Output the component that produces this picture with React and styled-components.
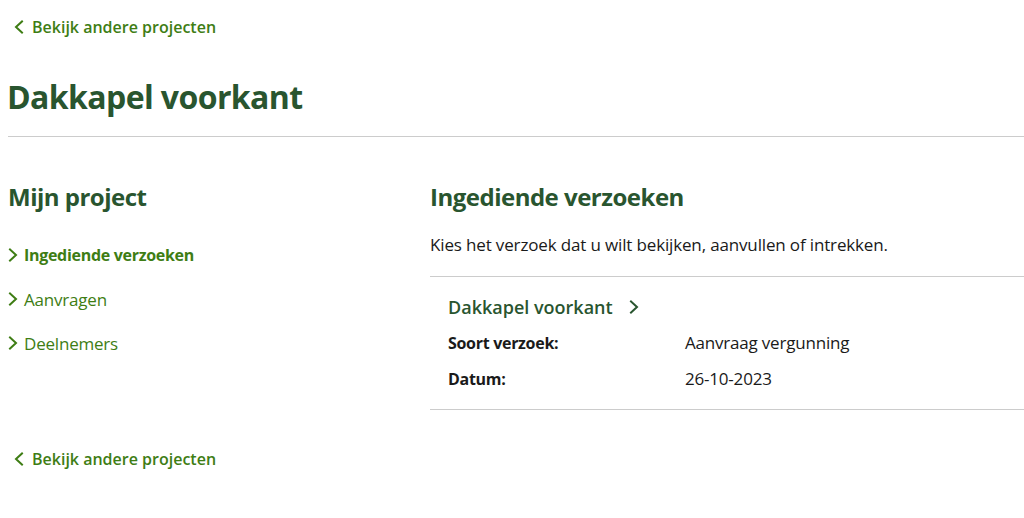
import React from "react";
import styled, { createGlobalStyle } from "styled-components";

const GlobalStyle = createGlobalStyle`
  body {
    margin: 0;
    background: #ffffff;
    font-family: "Open Sans", "Liberation Sans", sans-serif;
    color: #1a1a1a;
  }
`;

const darkGreen = "#29552f";
const linkGreen = "#3e7d14";

const Page = styled.div`
  padding-left: 8px;
  width: 1016px;
`;

const BackLink = styled.a`
  display: flex;
  align-items: center;
  gap: 8px;
  padding-left: 6px;
  height: 24px;
  margin-top: ${(p) => p.$top}px;
  color: ${linkGreen};
  font-size: 16px;
  font-weight: 600;
  text-decoration: none;
`;

const Title = styled.h1`
  margin: 38px 0 0 -1px;
  font-size: 32px;
  line-height: 40px;
  font-weight: 700;
  color: ${darkGreen};
  letter-spacing: -0.6px;
`;

const Divider = styled.hr`
  margin: 0;
  border: 0;
  border-top: 1px solid #cccccc;
`;

const TopDivider = styled(Divider)`
  margin-top: 19px;
`;

const Columns = styled.div`
  display: flex;
  margin-top: 44px;
`;

const Side = styled.nav`
  width: 422px;
  flex-shrink: 0;
`;

const Main = styled.section`
  flex: 1;
`;

const SubTitle = styled.h2`
  margin: 0;
  font-size: 24px;
  line-height: 32px;
  font-weight: 700;
  color: ${darkGreen};
  letter-spacing: -0.5px;
`;

const NavList = styled.ul`
  list-style: none;
  margin: 30px 0 0;
  padding: 0;
  display: flex;
  flex-direction: column;
  gap: 20px;
`;

const NavItem = styled.li`
  display: flex;
  align-items: center;
  gap: 6px;
  height: 24px;
  color: ${linkGreen};
  font-size: ${(p) => (p.$active ? 16 : 17)}px;
  font-weight: ${(p) => (p.$active ? 700 : 400)};
  letter-spacing: ${(p) => (p.$active ? -0.3 : -0.2)}px;
`;

const Intro = styled.p`
  margin: 20px 0 0;
  font-size: 17px;
  line-height: 24px;
  letter-spacing: -0.15px;
`;

const ListDivider = styled(Divider)`
  margin-top: 19px;
`;

const Request = styled.div`
  padding: 18px 18px 18px;
  border-bottom: 1px solid #cccccc;
`;

const RequestTitle = styled.a`
  display: flex;
  align-items: center;
  gap: 16px;
  color: ${darkGreen};
  font-size: 18px;
  line-height: 24px;
  font-weight: 600;
  text-decoration: none;
`;

const Details = styled.dl`
  display: grid;
  grid-template-columns: 237px 1fr;
  row-gap: 12px;
  margin: 12px 0 0;
  line-height: 24px;
`;

const Term = styled.dt`
  font-size: 16px;
  font-weight: 700;
  letter-spacing: -0.3px;
`;

const Value = styled.dd`
  margin: 0;
  font-size: 17px;
  letter-spacing: -0.2px;
`;

const Chevron = ({ dir = "right", color, size = 12 }) => (
  <svg
    width={size}
    height={size * 1.4}
    viewBox="0 0 10 14"
    fill="none"
    stroke={color}
    strokeWidth="2"
    strokeLinecap="square"
  >
    {dir === "right" ? (
      <polyline points="2,1.5 8,7 2,12.5" />
    ) : (
      <polyline points="8,1.5 2,7 8,12.5" />
    )}
  </svg>
);

const Back = ({ top }) => (
  <BackLink href="#" $top={top}>
    <Chevron dir="left" color={linkGreen} size={10} />
    Bekijk andere projecten
  </BackLink>
);

const navItems = [
  { label: "Ingediende verzoeken", active: true },
  { label: "Aanvragen" },
  { label: "Deelnemers" },
];

export default function App() {
  return (
    <Page>
      <GlobalStyle />
      <Back top={15} />
      <Title>Dakkapel voorkant</Title>
      <TopDivider />
      <Columns>
        <Side>
          <SubTitle>Mijn project</SubTitle>
          <NavList>
            {navItems.map((item) => (
              <NavItem key={item.label} $active={item.active}>
                <Chevron color={linkGreen} size={10} />
                {item.label}
              </NavItem>
            ))}
          </NavList>
        </Side>
        <Main>
          <SubTitle>Ingediende verzoeken</SubTitle>
          <Intro>Kies het verzoek dat u wilt bekijken, aanvullen of intrekken.</Intro>
          <ListDivider />
          <Request>
            <RequestTitle href="#">
              Dakkapel voorkant
              <Chevron color={darkGreen} size={10} />
            </RequestTitle>
            <Details>
              <Term>Soort verzoek:</Term>
              <Value>Aanvraag vergunning</Value>
              <Term>Datum:</Term>
              <Value>26-10-2023</Value>
            </Details>
          </Request>
        </Main>
      </Columns>
      <Back top={37} />
    </Page>
  );
}
